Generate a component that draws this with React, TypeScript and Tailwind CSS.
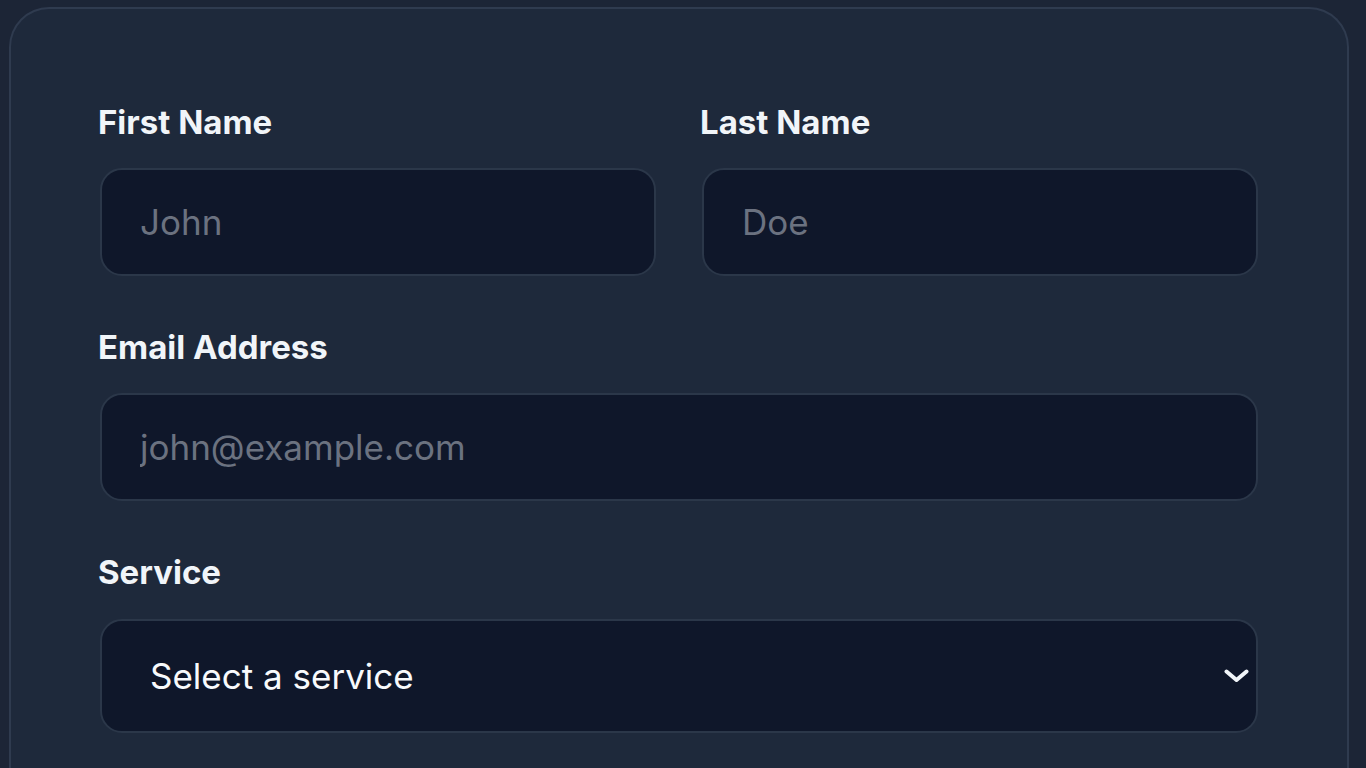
import React from 'react';

const labelCls = 'block text-[33px] leading-[44px] font-bold text-[#f1f5f9] mb-[24px] -ml-[2px]';
const inputCls =
  'block w-full h-[108px] rounded-[22px] border-2 border-[#2b3749] bg-[#0f172a] px-[38px] text-[35px] text-[#f1f5f9] placeholder:text-[#6b7280] outline-none';

const Field: React.FC<{ label: string; placeholder: string; type?: string }> = ({ label, placeholder, type = 'text' }) => (
  <div>
    <label className={labelCls}>{label}</label>
    <input type={type} placeholder={placeholder} className={inputCls} />
  </div>
);

export default function App() {
  return (
    <div className="min-h-screen bg-[#1c2536] pt-[7px] pl-[9px] pr-[17px] font-[Inter,sans-serif]">
      <div className="rounded-t-[40px] border-2 border-b-0 border-[#2f3b4f] bg-[#1e293b] px-[89px] pt-[91px] pb-[60px]">
        <div className="grid grid-cols-2 gap-x-[46px]">
          <Field label="First Name" placeholder="John" />
          <Field label="Last Name" placeholder="Doe" />
        </div>

        <div className="mt-[49px]">
          <Field label="Email Address" placeholder="john@example.com" type="email" />
        </div>

        <div className="mt-[49px]">
          <label className="block text-[33px] leading-[44px] font-bold text-[#f1f5f9] mb-[25px] -ml-[2px]">Service</label>
          <div className="relative">
            <select
              defaultValue=""
              className="block w-full h-[114px] appearance-none rounded-[22px] border-2 border-[#2b3749] bg-[#0f172a] pl-[48px] pr-[60px] text-[35px] text-[#f8fafc] outline-none"
            >
              <option value="">Select a service</option>
              <option value="web">Web Development</option>
              <option value="design">Design</option>
              <option value="consulting">Consulting</option>
            </select>
            <svg
              className="pointer-events-none absolute right-[9px] top-1/2 -translate-y-1/2"
              width="25"
              height="14"
              viewBox="0 0 25 14"
              fill="none"
            >
              <path d="M2.5 2.5 L12.5 11 L22.5 2.5" stroke="#f1f5f9" strokeWidth="4" strokeLinecap="round" strokeLinejoin="round" />
            </svg>
          </div>
        </div>
      </div>
    </div>
  );
}
